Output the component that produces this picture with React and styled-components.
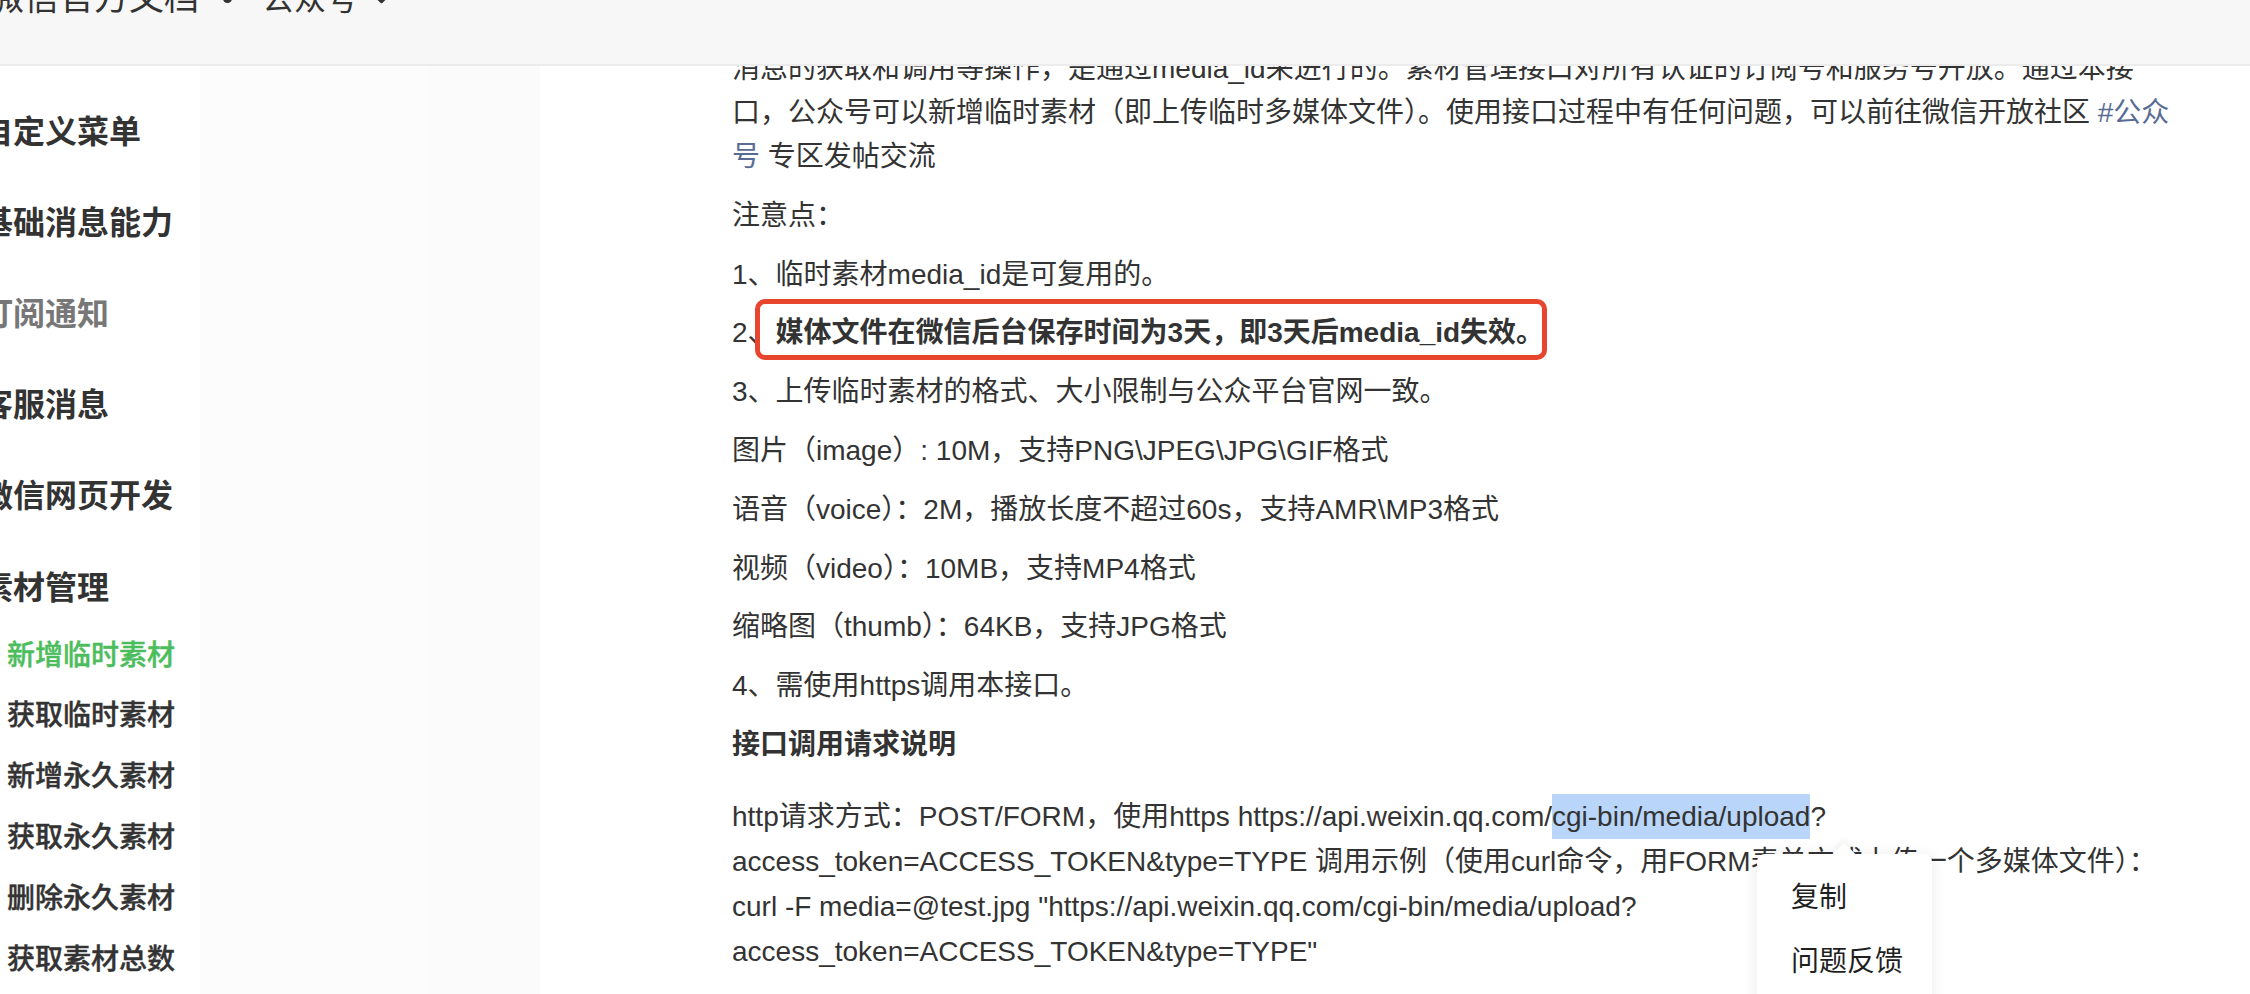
import React from "react";
import styled, { createGlobalStyle } from "styled-components";

const GlobalStyle = createGlobalStyle`
  html, body {
    margin: 0;
    padding: 0;
    background: #fff;
  }
  body {
    width: 2250px;
    height: 994px;
    overflow: hidden;
    font-family: "Liberation Sans", "Noto Sans CJK SC", sans-serif;
    color: #333;
  }
`;

const Page = styled.div`
  position: relative;
  width: 2250px;
  height: 994px;
  overflow: hidden;
  background: #fff;
`;

/* ---------- top bar (fixed, lies over the scrolled content) ---------- */
const TopBar = styled.header`
  position: absolute;
  top: 0;
  left: 0;
  right: 0;
  height: 64px;
  background: #f7f7f7;
  border-bottom: 2px solid #ececec;
  overflow: hidden;
  z-index: 10;
`;

const BrandRow = styled.div`
  display: flex;
  align-items: baseline;
  margin: -20px 0 0 -11px;
  color: #333;
  white-space: nowrap;
`;

const Brand = styled.span`
  font-size: 35px;
  line-height: 35px;
`;

const Separator = styled.span`
  align-self: center;
  width: 9px;
  height: 9px;
  border-radius: 50%;
  background: #333;
  margin: 0 30px 0 24px;
`;

const Channel = styled.span`
  font-size: 32px;
  line-height: 35px;
`;

const Chevron = styled.svg`
  align-self: center;
  margin-left: 14px;
  width: 19px;
  height: 11px;
`;

/* ---------- layout ---------- */
const Body = styled.div`
  display: flex;
  height: 994px;
`;

const Sidebar = styled.nav`
  flex: none;
  width: 540px;
  box-sizing: border-box;
  padding-top: 86.6px;
  overflow: hidden;
  background: linear-gradient(90deg, #fff 0 200px, #fcfcfc 200px 427px, #fbfbfb 427px 540px);
`;

const NavList = styled.ul`
  list-style: none;
  margin: 0 0 0 -19px;
  padding: 0;
`;

const NavGroup = styled.li`
  margin: 0;
`;

const NavHeading = styled.div`
  font-size: 32px;
  font-weight: 700;
  line-height: 44.8px;
  padding: 23.2px 0 ${(p) => (p.$open ? "15.2px" : "23.2px")};
  color: ${(p) => (p.$muted ? "#777" : "#333")};
  white-space: nowrap;
`;

const SubList = styled.ul`
  list-style: none;
  margin: 0;
  padding: 0 0 0 26px;
`;

const SubItem = styled.li`
  font-size: 28px;
  font-weight: 500;
  line-height: 44.8px;
  padding: 8px 0;
  color: ${(p) => (p.$active ? "#4cbd5d" : "#333")};
  -webkit-text-stroke: 0.4px currentColor;
  white-space: nowrap;
`;

const Main = styled.main`
  flex: 1;
  padding: 47px 0 0 192px;
  font-size: 28px;
  line-height: 44px;
  color: #333;
`;

const Para = styled.p`
  margin: 0 0 14.8px;
  white-space: nowrap;
`;

const Strong = styled.strong`
  font-weight: 700;
`;

const Annotated = styled.strong`
  position: relative;
  display: inline-block;
  font-weight: 700;
  line-height: 44px;

  &::after {
    content: "";
    position: absolute;
    left: -21px;
    right: -3px;
    top: -12.4px;
    bottom: -4.6px;
    border: 5px solid #e8452f;
    border-radius: 10px;
    pointer-events: none;
  }
`;

const Link = styled.a`
  color: #576b95;
  text-decoration: none;
`;

const RequestBlock = styled.p`
  margin: 0;
  padding-top: 12.5px;
  line-height: 45px;
  white-space: nowrap;
`;

const Selected = styled.span`
  display: inline-block;
  line-height: 45px;
  background: #b9d6fa;
`;

/* ---------- context menu ---------- */
const ContextMenu = styled.ul`
  position: absolute;
  left: 1757px;
  top: 854px;
  width: 175px;
  height: 170px;
  box-sizing: border-box;
  margin: 0;
  padding: 12px 0 0 34px;
  list-style: none;
  background: #fff;
  border-radius: 8px;
  box-shadow: 0 2px 16px rgba(0, 0, 0, 0.09);
  z-index: 5;

  &::before {
    content: "";
    position: absolute;
    top: -8px;
    left: 79px;
    width: 16px;
    height: 16px;
    background: #fff;
    transform: rotate(45deg);
    box-shadow: -3px -3px 6px rgba(0, 0, 0, 0.05);
  }
`;

const MenuItem = styled.li`
  position: relative;
  font-size: 28px;
  line-height: 64px;
  color: #1f1f1f;
  white-space: nowrap;
`;

const navGroups = [
  { title: "自定义菜单" },
  { title: "基础消息能力" },
  { title: "订阅通知", muted: true },
  { title: "客服消息" },
  { title: "微信网页开发" },
  {
    title: "素材管理",
    open: true,
    items: ["新增临时素材", "获取临时素材", "新增永久素材", "获取永久素材", "删除永久素材", "获取素材总数"],
    active: 0,
  },
];

const notes = [
  "3、上传临时素材的格式、大小限制与公众平台官网一致。",
  "图片（image）: 10M，支持PNG\\JPEG\\JPG\\GIF格式",
  "语音（voice）：2M，播放长度不超过60s，支持AMR\\MP3格式",
  "视频（video）：10MB，支持MP4格式",
  "缩略图（thumb）：64KB，支持JPG格式",
  "4、需使用https调用本接口。",
];

export default function App() {
  return (
    <Page>
      <GlobalStyle />
      <TopBar>
        <BrandRow>
          <Brand>微信官方文档</Brand>
          <Separator />
          <Channel>公众号</Channel>
          <Chevron viewBox="0 0 19 11" fill="none">
            <path d="M2 2l7.5 7L17 2" stroke="#333" strokeWidth="2.4" strokeLinecap="round" strokeLinejoin="round" />
          </Chevron>
        </BrandRow>
      </TopBar>

      <Body>
        <Sidebar>
          <NavList>
            {navGroups.map((g) => (
              <NavGroup key={g.title}>
                <NavHeading $open={g.open} $muted={g.muted}>
                  {g.title}
                </NavHeading>
                {g.items && (
                  <SubList>
                    {g.items.map((it, i) => (
                      <SubItem key={it} $active={i === g.active}>
                        {it}
                      </SubItem>
                    ))}
                  </SubList>
                )}
              </NavGroup>
            ))}
          </NavList>
        </Sidebar>

        <Main>
          <Para>
            消息的获取和调用等操作，是通过media_id来进行的。素材管理接口对所有认证的订阅号和服务号开放。通过本接
            <br />
            口，公众号可以新增临时素材（即上传临时多媒体文件）。使用接口过程中有任何问题，可以前往微信开放社区{" "}
            <Link href="#">
              #公众
              <br />号
            </Link>{" "}
            专区发帖交流
          </Para>
          <Para>注意点：</Para>
          <Para>1、临时素材media_id是可复用的。</Para>
          <Para>
            2、<Annotated>媒体文件在微信后台保存时间为3天，即3天后media_id失效。</Annotated>
          </Para>
          {notes.map((n) => (
            <Para key={n}>{n}</Para>
          ))}
          <Para>
            <Strong>接口调用请求说明</Strong>
          </Para>
          <RequestBlock>
            http请求方式：POST/FORM，使用https https://api.weixin.qq.com/<Selected>cgi-bin/media/upload</Selected>?
            <br />
            access_token=ACCESS_TOKEN&amp;type=TYPE 调用示例（使用curl命令，用FORM表单方式上传一个多媒体文件）：
            <br />
            curl -F media=@test.jpg "https://api.weixin.qq.com/cgi-bin/media/upload?
            <br />
            access_token=ACCESS_TOKEN&amp;type=TYPE"
          </RequestBlock>
        </Main>
      </Body>

      <ContextMenu>
        <MenuItem>复制</MenuItem>
        <MenuItem>问题反馈</MenuItem>
      </ContextMenu>
    </Page>
  );
}
